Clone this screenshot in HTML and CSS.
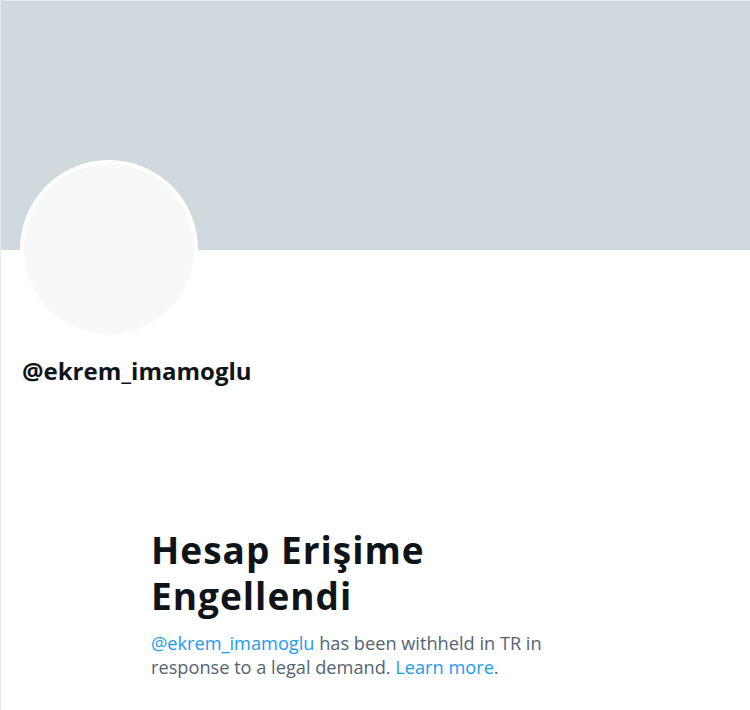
FILE: index.html
```html
<!DOCTYPE html>
<html lang="tr">
<head>
    <meta charset="UTF-8">
    <meta name="viewport" content="width=device-width, initial-scale=1.0">
    <title>@ekrem_imamoglu</title>
    <link rel="stylesheet" href="styles.css">
</head>
<body>
    <div class="page">
        <div class="banner"></div>
        <div class="profile">
            <div class="avatar"></div>
            <div class="handle">@ekrem_imamoglu</div>
        </div>
        <div class="notice">
            <h1>Hesap Erişime Engellendi</h1>
            <p>
                <a href="#">@ekrem_imamoglu</a> has been withheld in TR in
                response to a legal demand. <a href="#">Learn more</a>.
            </p>
        </div>
    </div>
</body>
</html>
```

FILE: styles.css
```css
body {
    margin: 0;
    background-color: #fff;
    font-family: "Open Sans", "Noto Sans", sans-serif;
    color: #0f1419;
}
.page {
    height: 710px;
    border-top: 1px solid #e6eaec;
    border-left: 1px solid #e6eaec;
    box-sizing: border-box;
}
.banner {
    height: 249px;
    background-color: #cfd9de;
}
.profile {
    padding-left: 19px;
}
.avatar {
    width: 170px;
    height: 170px;
    margin-top: -90px;
    border: 4px solid #fff;
    border-radius: 50%;
    background-color: #f7f9f9;
}
.handle {
    margin-top: 18px;
    padding-left: 2px;
    font-size: 24px;
    font-weight: 700;
    line-height: 30px;
}
.notice {
    width: 440px;
    margin: 141px 0 0 150px;
}
.notice h1 {
    margin: 0 0 12px;
    font-size: 37px;
    font-weight: 700;
    letter-spacing: 1px;
    line-height: 46px;
}
.notice p {
    margin: 0;
    font-size: 18.2px;
    line-height: 24px;
    color: #536471;
}
.notice a {
    color: #1d9bf0;
    text-decoration: none;
}
```
